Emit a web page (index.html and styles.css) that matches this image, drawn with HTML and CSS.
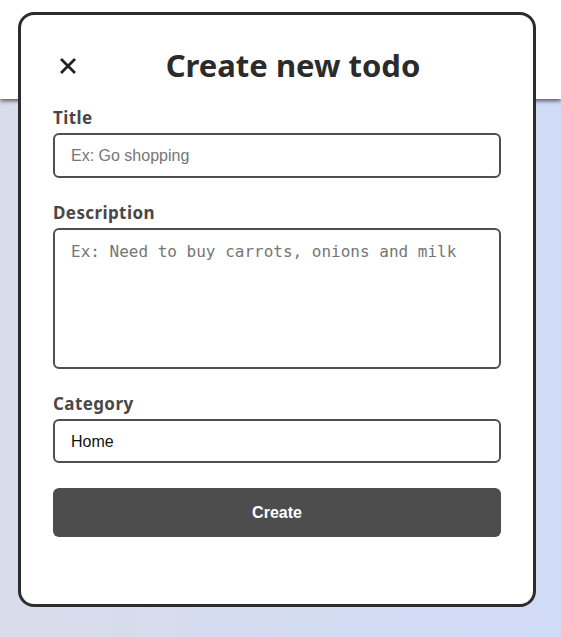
FILE: index.html
```html
<!DOCTYPE html>
<html lang="en">
<head>
<meta charset="utf-8">
<title>Create new todo</title>
<link rel="stylesheet" href="styles.css">
</head>
<body>
<header class="topbar"></header>
<div class="modal">
  <div class="modal-head">
    <button class="close" aria-label="Close">
      <svg width="18" height="18" viewBox="0 0 18 18"><path d="M2 2 L16 16 M16 2 L2 16" stroke="#222" stroke-width="2.8" stroke-linecap="butt" fill="none"/></svg>
    </button>
    <h1 class="modal-title">Create new todo</h1>
  </div>
  <form class="form">
    <div class="field">
      <label class="label" for="t">Title</label>
      <input id="t" class="input" type="text" placeholder="Ex: Go shopping">
    </div>
    <div class="field">
      <label class="label" for="d">Description</label>
      <textarea id="d" class="textarea" placeholder="Ex: Need to buy carrots, onions and milk"></textarea>
    </div>
    <div class="field">
      <label class="label" for="c">Category</label>
      <input id="c" class="input input-short" type="text" value="Home">
    </div>
    <button type="button" class="submit">Create</button>
  </form>
</div>
</body>
</html>
```
FILE: styles.css
```css
html, body {
  margin: 0;
  height: 100%;
}
body {
  background: linear-gradient(to right, #d9dcea, #d0dbf7);
  font-family: "Liberation Sans", Arial, sans-serif;
  position: relative;
}
.topbar {
  height: 99px;
  background: #fff;
  box-shadow: 0 2px 4px rgba(0, 0, 0, 0.6);
}
.modal {
  position: absolute;
  left: 18px;
  top: 12px;
  width: 518px;
  height: 595px;
  box-sizing: border-box;
  background: #fff;
  border: 3px solid #2d2d2d;
  border-radius: 16px;
  padding: 32px;
}
.modal-head {
  display: flex;
  align-items: center;
  height: 36px;
}
.close {
  width: 32px;
  height: 36px;
  padding: 0 0 0 6px;
  border: 0;
  background: none;
  display: flex;
  align-items: center;
  justify-content: flex-start;
  margin-top: 2px;
}
.modal-title {
  flex: 1;
  margin: 0;
  text-align: center;
  font-family: "Noto Sans", sans-serif;
  font-weight: 700;
  font-size: 31px;
  line-height: 36px;
  color: #2b2b2b;
}
.form {
  margin-top: 24px;
  display: flex;
  flex-direction: column;
}
.field {
  display: flex;
  flex-direction: column;
  margin-bottom: 24px;
}
.label {
  font-family: "Noto Sans", sans-serif;
  font-weight: 700;
  font-size: 17px;
  line-height: 22px;
  letter-spacing: 0.4px;
  color: #4a4646;
  margin-bottom: 4px;
}
.input, .textarea {
  box-sizing: border-box;
  width: 100%;
  border: 2px solid #4f4f4f;
  border-radius: 6px;
  padding: 0 16px;
  font-size: 16px;
  color: #111;
  background: #fff;
  outline: none;
}
.input {
  height: 45px;
  font-family: "Liberation Sans", Arial, sans-serif;
}
.input-short {
  height: 44px;
  padding-top: 1px;
}
.textarea {
  height: 141px;
  padding-top: 12px;
  font-family: "DejaVu Sans Mono", monospace;
  resize: none;
  line-height: 1.2;
}
.input::placeholder, .textarea::placeholder {
  color: #767676;
}
.submit {
  margin-top: 1px;
  height: 49px;
  border: 0;
  border-radius: 6px;
  background: #4d4d4d;
  color: #fff;
  font-family: "Liberation Sans", Arial, sans-serif;
  font-weight: 700;
  font-size: 16px;
}
```
